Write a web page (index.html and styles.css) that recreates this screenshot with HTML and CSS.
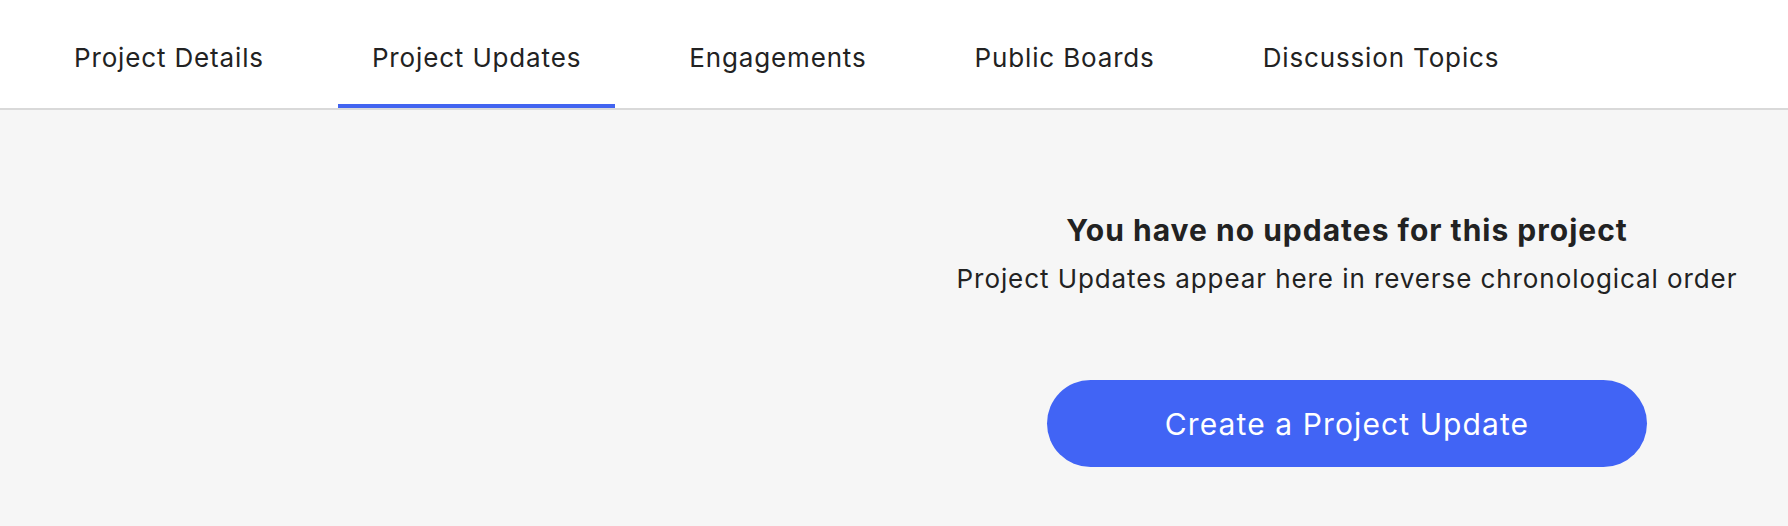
FILE: index.html
```html
<!DOCTYPE html>
<html lang="en">
<head>
<meta charset="utf-8">
<title>Project Updates</title>
<link rel="stylesheet" href="styles.css">
</head>
<body>
<div class="page">
  <nav class="tabs">
    <a class="tab">Project Details</a>
    <a class="tab active">Project Updates</a>
    <a class="tab">Engagements</a>
    <a class="tab">Public Boards</a>
    <a class="tab">Discussion Topics</a>
  </nav>
  <main class="main">
    <div class="spacer"></div>
    <section class="empty">
      <h2 class="empty-title">You have no updates for this project</h2>
      <p class="empty-text">Project Updates appear here in reverse chronological order</p>
      <button class="cta">Create a Project Update</button>
    </section>
  </main>
</div>
</body>
</html>
```

FILE: styles.css
```css
* { box-sizing: border-box; }
html, body { margin: 0; padding: 0; }
body {
  font-family: Inter, "Noto Sans", "Liberation Sans", sans-serif;
  color: #222222;
  background: #f6f6f6;
  width: 1788px;
  height: 526px;
  overflow: hidden;
}
.page {
  display: flex;
  flex-direction: column;
  height: 526px;
}
.tabs {
  display: flex;
  gap: 40px;
  padding-left: 40px;
  background: #ffffff;
  border-bottom: 2px solid #d9d9d9;
  height: 110px;
}
.tab {
  display: block;
  padding: 42px 34px 0;
  height: 108px;
  font-size: 26px;
  line-height: 31px;
  letter-spacing: 0.85px;
  color: #222222;
  border-bottom: 4px solid transparent;
  white-space: nowrap;
}
.tab.active {
  border-bottom-color: #4264f0;
}
.main {
  flex: 1;
  display: grid;
  grid-template-columns: 906px 1fr;
  background: #f6f6f6;
}
.empty {
  display: flex;
  flex-direction: column;
  align-items: center;
  padding-top: 102px;
}
.empty-title {
  margin: 0;
  font-size: 30px;
  line-height: 36px;
  font-weight: 650;
  letter-spacing: 1px;
  color: #222222;
}
.empty-text {
  margin: 15px 0 0;
  font-size: 26px;
  line-height: 31px;
  letter-spacing: 0.92px;
  color: #222222;
}
.cta {
  margin-top: 86px;
  width: 600px;
  height: 87px;
  border: none;
  border-radius: 44px;
  background: #4164f5;
  color: #ffffff;
  font-family: inherit;
  font-size: 30px;
  font-weight: 400;
  letter-spacing: 1.1px;
  cursor: pointer;
}
```
